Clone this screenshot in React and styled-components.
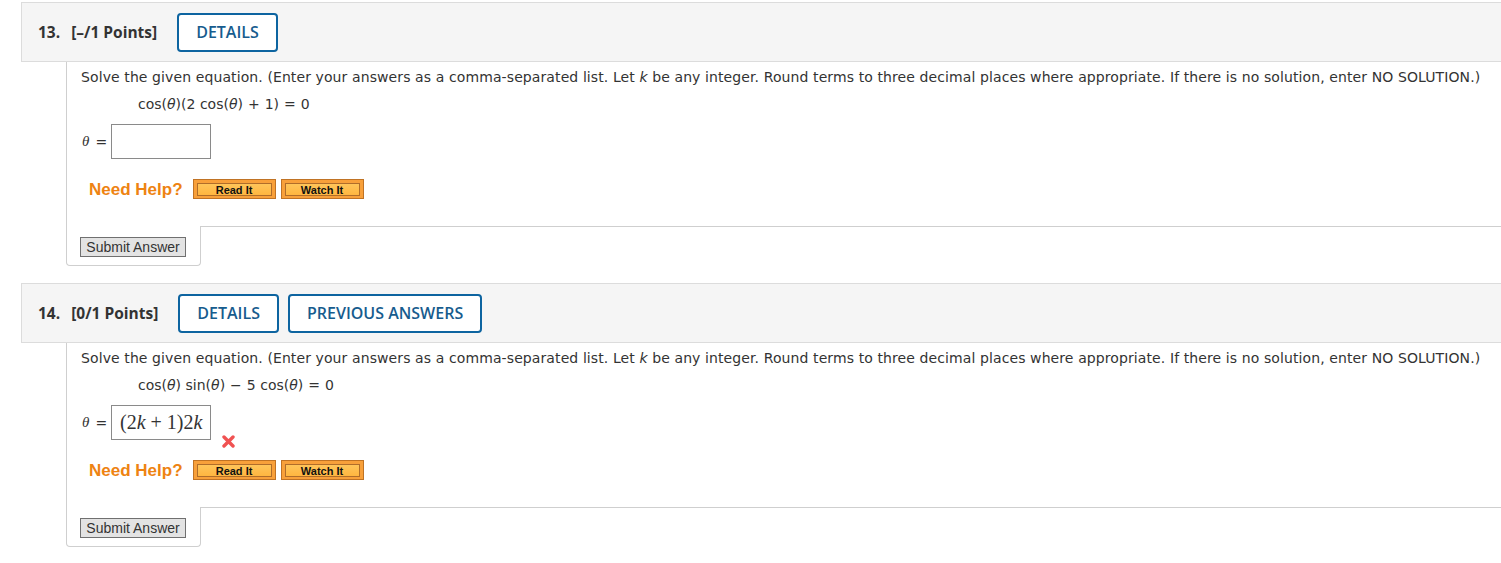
import React from "react";
import styled, { createGlobalStyle } from "styled-components";

const Global = createGlobalStyle`
  html, body { margin: 0; padding: 0; background: #fff; }
  body { font-family: "DejaVu Sans", Verdana, sans-serif; color: #333; }
`;

const Page = styled.div`
  padding: 2px 0 0 21px;
  overflow: hidden;
`;

const Question = styled.section`
  margin-bottom: 17px;
`;

const Header = styled.div`
  display: flex;
  align-items: center;
  box-sizing: border-box;
  height: 60px;
  margin-right: -40px;
  padding-left: 16px;
  background: #f5f5f5;
  border: 1px solid #dcdcdc;
  border-right: none;
  font-family: "Open Sans", "Liberation Sans", sans-serif;
  color: #333;
`;

const Num = styled.span`
  font-size: 15.5px;
  font-weight: 700;
  margin-right: 11px;
`;

const Points = styled.span`
  font-size: 15.5px;
  font-weight: 700;
`;

const HeaderButtons = styled.div`
  display: flex;
  gap: 9px;
  margin-left: 20px;
`;

const OutlineButton = styled.button`
  box-sizing: border-box;
  height: 39px;
  padding: 0 17px;
  border: 2px solid #0d64a0;
  border-radius: 4px;
  background: #fff;
  color: #175c8e;
  font-family: "Open Sans", "Liberation Sans", sans-serif;
  font-size: 16px;
  font-weight: 600;
`;

const BodyWrap = styled.div`
  margin-left: 45px;
`;

const Body = styled.div`
  border-left: 1px solid #cfcfcf;
  padding: 6px 0 27px 14px;
`;

const Prompt = styled.div`
  font-size: 14px;
  letter-spacing: 0.1px;
  line-height: 18px;
  color: #333;
  white-space: nowrap;
`;

const Equation = styled.div`
  margin: 9px 0 0 57px;
  font-size: 14px;
  line-height: 18px;
  color: #333;
  white-space: nowrap;
`;

const Theta = styled.i`
  font-style: italic;
`;

const Op = styled.span`
  padding: 0 ${(p) => p.$pad || 5}px;
`;

const AnswerRow = styled.div`
  display: flex;
  align-items: center;
  margin: 11px 0 0 1px;
`;

const Label = styled.span`
  display: inline-flex;
  align-items: center;
  width: 29px;
  font-family: "Liberation Serif", "DejaVu Serif", serif;
  font-size: 15px;
  color: #333;
  white-space: nowrap;
`;

const LabelEq = styled.span`
  margin-left: 6px;
  font-family: "DejaVu Sans", sans-serif;
  font-size: 14px;
`;

const AnswerBox = styled.div`
  box-sizing: border-box;
  width: 100px;
  height: 35px;
  border: 1px solid #8a8a8a;
  background: #fff;
  display: flex;
  align-items: center;
  padding-left: 8px;
  font-family: "Liberation Serif", "DejaVu Serif", serif;
  font-size: 20px;
  color: #333;
  white-space: nowrap;
`;

const Wrong = styled.span`
  align-self: flex-end;
  margin: 0 0 -8px 11px;
  display: inline-flex;
`;

const HelpRow = styled.div`
  display: flex;
  align-items: center;
  margin-top: 20px;
  padding-left: 8px;
`;

const NeedHelp = styled.span`
  font-family: "Liberation Sans", Arial, sans-serif;
  font-weight: 700;
  font-size: 17px;
  line-height: 20px;
  color: #ee8312;
  margin-right: 10px;
  position: relative;
  top: 1px;
`;

const HelpButtons = styled.div`
  display: flex;
  gap: 5px;
`;

const HelpButton = styled.button`
  box-sizing: border-box;
  width: 83px;
  height: 20px;
  padding: 3px 3px 2px 3px;
  border: 1px solid #c07324;
  background: #f8a03a;
  display: flex;
  cursor: pointer;
`;

const HelpInner = styled.span`
  flex: 1;
  box-sizing: border-box;
  border: 1px solid #b06d2a;
  background: linear-gradient(#ffc55a, #ffb640);
  display: flex;
  align-items: center;
  justify-content: center;
  font-family: "Liberation Sans", Arial, sans-serif;
  font-weight: 700;
  font-size: 11px;
  color: #111;
`;

const SubmitRow = styled.div`
  display: flex;
`;

const SubmitTab = styled.div`
  box-sizing: border-box;
  width: 135px;
  padding: 11px 14px 8px 13px;
  border: 1px solid #cfcfcf;
  border-top: none;
  border-radius: 0 0 4px 4px;
`;

const Filler = styled.div`
  flex: 1;
  border-top: 1px solid #cfcfcf;
  margin-right: -40px;
`;

const SubmitButton = styled.button`
  box-sizing: border-box;
  width: 106px;
  height: 20px;
  padding: 0;
  border: 1px solid #707070;
  background: #e3e3e3;
  color: #333;
  font-family: "Liberation Sans", Arial, sans-serif;
  font-size: 14px;
  line-height: 18px;
  display: block;
`;

const K = styled.i`
  font-style: italic;
`;

function XMark() {
  return (
    <svg width="13" height="13" viewBox="0 0 13 13">
      <path d="M2 2 L11 11 M11 2 L2 11" stroke="#f05252" strokeWidth="3.4" strokeLinecap="round" />
    </svg>
  );
}

const PROMPT =
  "Solve the given equation. (Enter your answers as a comma-separated list. Let ";
const PROMPT2 =
  " be any integer. Round terms to three decimal places where appropriate. If there is no solution, enter NO SOLUTION.)";

function QuestionBlock({ num, points, prevAnswers, equation, answer }) {
  return (
    <Question>
      <Header>
        <Num>{num}.</Num>
        <Points>[{points} Points]</Points>
        <HeaderButtons>
          <OutlineButton>DETAILS</OutlineButton>
          {prevAnswers && <OutlineButton>PREVIOUS ANSWERS</OutlineButton>}
        </HeaderButtons>
      </Header>
      <BodyWrap>
        <Body>
          <Prompt>
            {PROMPT}
            <K>k</K>
            {PROMPT2}
          </Prompt>
          <Equation>{equation}</Equation>
          <AnswerRow>
            <Label>
              <i>θ</i>
              <LabelEq>=</LabelEq>
            </Label>
            <AnswerBox>{answer}</AnswerBox>
            {answer && (
              <Wrong>
                <XMark />
              </Wrong>
            )}
          </AnswerRow>
          <HelpRow>
            <NeedHelp>Need Help?</NeedHelp>
            <HelpButtons>
              <HelpButton>
                <HelpInner>Read It</HelpInner>
              </HelpButton>
              <HelpButton>
                <HelpInner>Watch It</HelpInner>
              </HelpButton>
            </HelpButtons>
          </HelpRow>
        </Body>
        <SubmitRow>
          <SubmitTab>
            <SubmitButton>Submit Answer</SubmitButton>
          </SubmitTab>
          <Filler />
        </SubmitRow>
      </BodyWrap>
    </Question>
  );
}

export default function App() {
  return (
    <>
      <Global />
      <Page>
        <QuestionBlock
          num={13}
          points="–/1"
          equation={
            <>
              cos(<Theta>θ</Theta>)(2 cos(<Theta>θ</Theta>)<Op>+</Op>1)<Op>=</Op>0
            </>
          }
        />
        <QuestionBlock
          num={14}
          points="0/1"
          prevAnswers
          equation={
            <>
              cos(<Theta>θ</Theta>) sin(<Theta>θ</Theta>)<Op>−</Op>5 cos(<Theta>θ</Theta>)<Op>=</Op>0
            </>
          }
          answer={
            <>
              (2<K>k</K>
              <Op $pad={5}>+</Op>1)2<K>k</K>
            </>
          }
        />
      </Page>
    </>
  );
}
